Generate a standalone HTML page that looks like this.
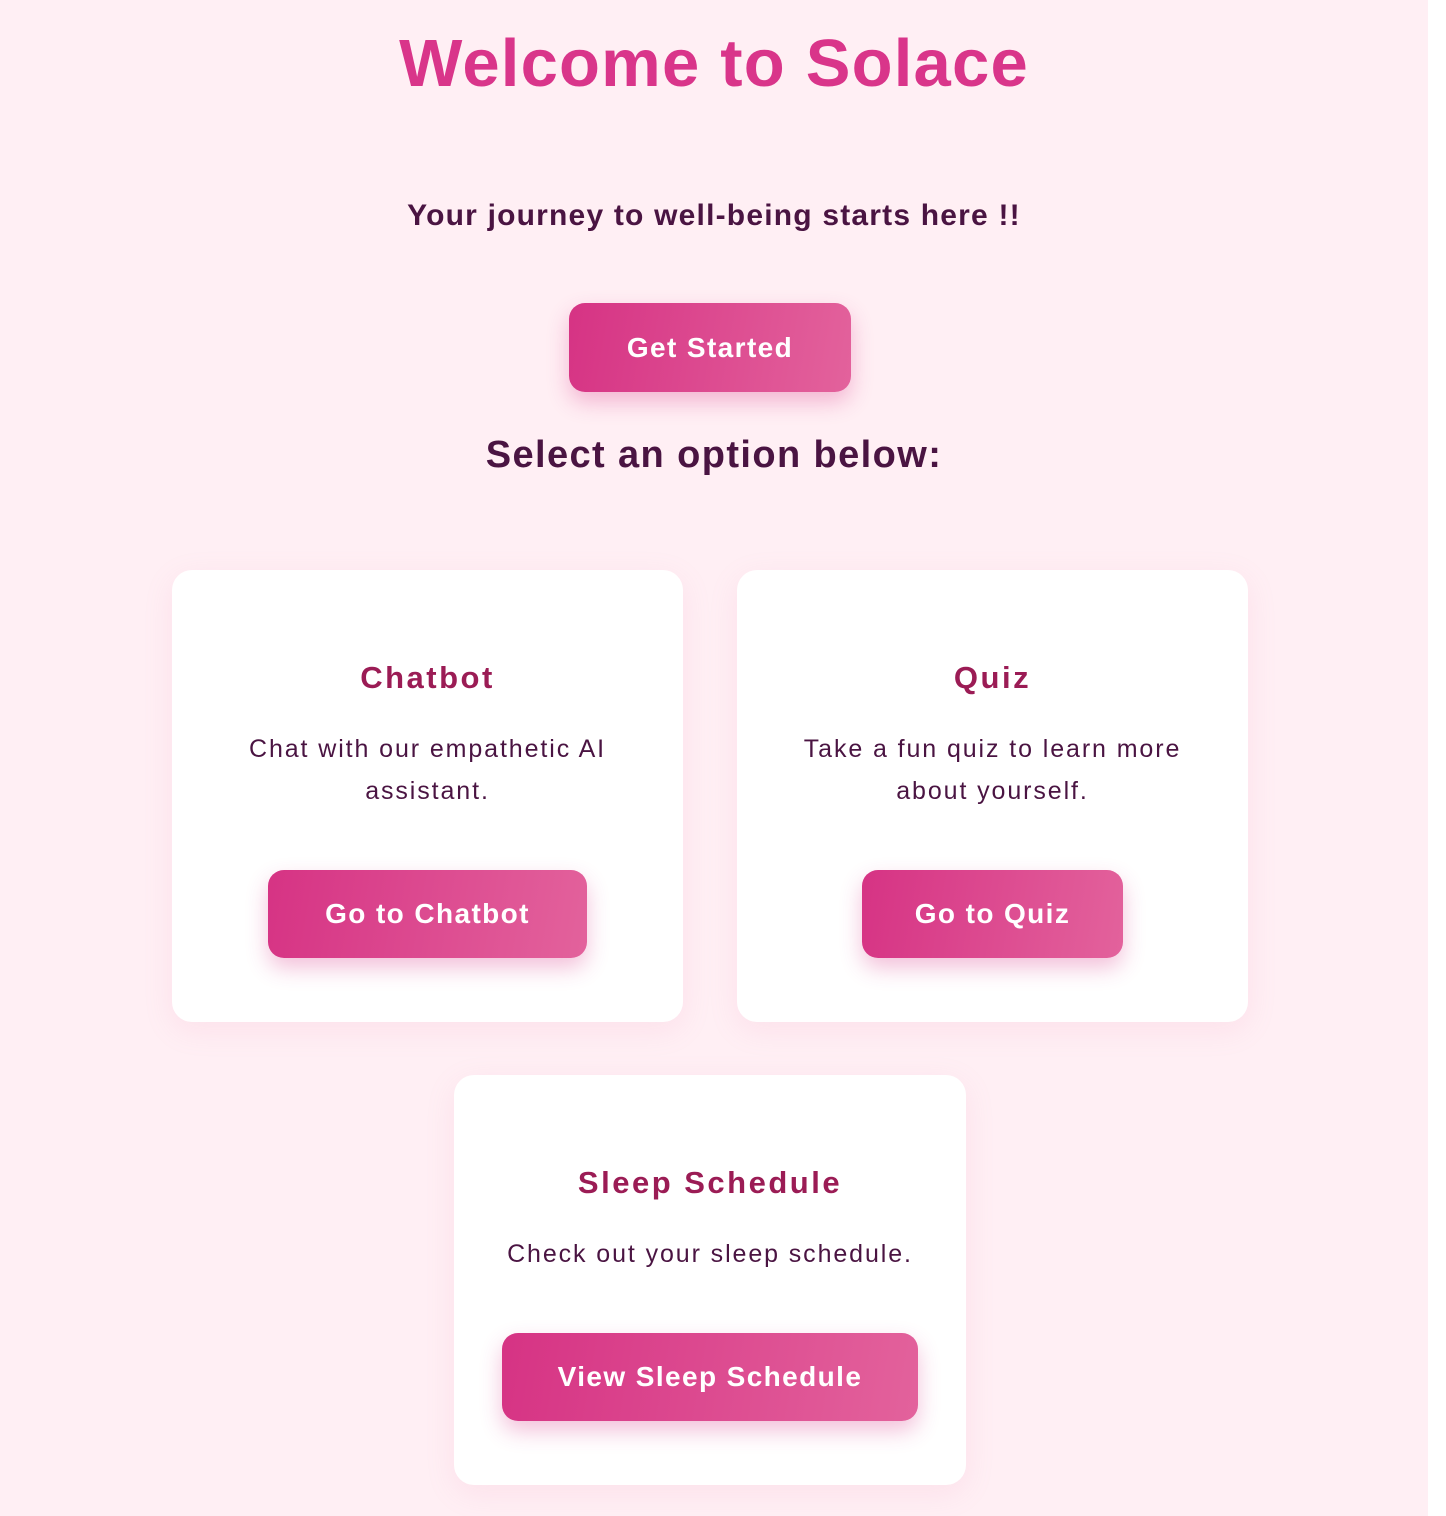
<!DOCTYPE html>
<html><head><style>
html,body{margin:0;padding:0;background:#fff;}
#pg{position:absolute;left:0;top:0;width:1428px;height:1516px;background:#ffeff4;font-family:"Liberation Sans",sans-serif;overflow:hidden;}
.c{position:absolute;text-align:center;}
.t{left:0;width:1428px;top:24px;font-size:67px;font-weight:bold;color:#d9358a;letter-spacing:1.2px;line-height:80px;}
.s{left:0;width:1428px;top:198px;font-size:30px;font-weight:bold;color:#4a1442;line-height:36px;letter-spacing:1.2px;}
.h{left:0;width:1428px;top:432px;font-size:38px;font-weight:bold;color:#4a1442;line-height:46px;letter-spacing:1.4px;}
.btn{position:absolute;border-radius:16px;background:linear-gradient(100deg,#d63384,#e3629c);color:#fff;font-weight:bold;font-size:28px;letter-spacing:1.4px;display:flex;align-items:center;justify-content:center;box-shadow:0 10px 22px rgba(214,51,132,0.3);}
.card{position:absolute;background:#fff;border-radius:20px;box-shadow:0 8px 30px rgba(230,120,170,0.12);}
.ct{position:absolute;left:0;right:0;text-align:center;font-size:31px;font-weight:bold;color:#9b1c55;letter-spacing:2.5px;}
.cd{position:absolute;left:20px;right:20px;text-align:center;font-size:25px;line-height:42px;color:#4a1442;letter-spacing:1.9px;}
</style></head><body><div id="pg">
<div class="c t">Welcome to Solace</div>
<div class="c s">Your journey to well-being starts here !!</div>
<div class="btn" style="left:569px;top:303px;width:282px;height:89px;">Get Started</div>
<div class="c h">Select an option below:</div>

<div class="card" style="left:172px;top:570px;width:511px;height:452px;">
<div class="ct" style="top:90px;">Chatbot</div>
<div class="cd" style="top:158px;">Chat with our empathetic AI<br>assistant.</div>
</div>
<div class="btn" style="left:268px;top:870px;width:319px;height:88px;">Go to Chatbot</div>

<div class="card" style="left:737px;top:570px;width:511px;height:452px;">
<div class="ct" style="top:90px;">Quiz</div>
<div class="cd" style="top:158px;">Take a fun quiz to learn more<br>about yourself.</div>
</div>
<div class="btn" style="left:862px;top:870px;width:261px;height:88px;">Go to Quiz</div>

<div class="card" style="left:454px;top:1075px;width:512px;height:410px;">
<div class="ct" style="top:90px;">Sleep Schedule</div>
<div class="cd" style="top:158px;">Check out your sleep schedule.</div>
</div>
<div class="btn" style="left:502px;top:1333px;width:416px;height:88px;">View Sleep Schedule</div>
</div></body></html>
